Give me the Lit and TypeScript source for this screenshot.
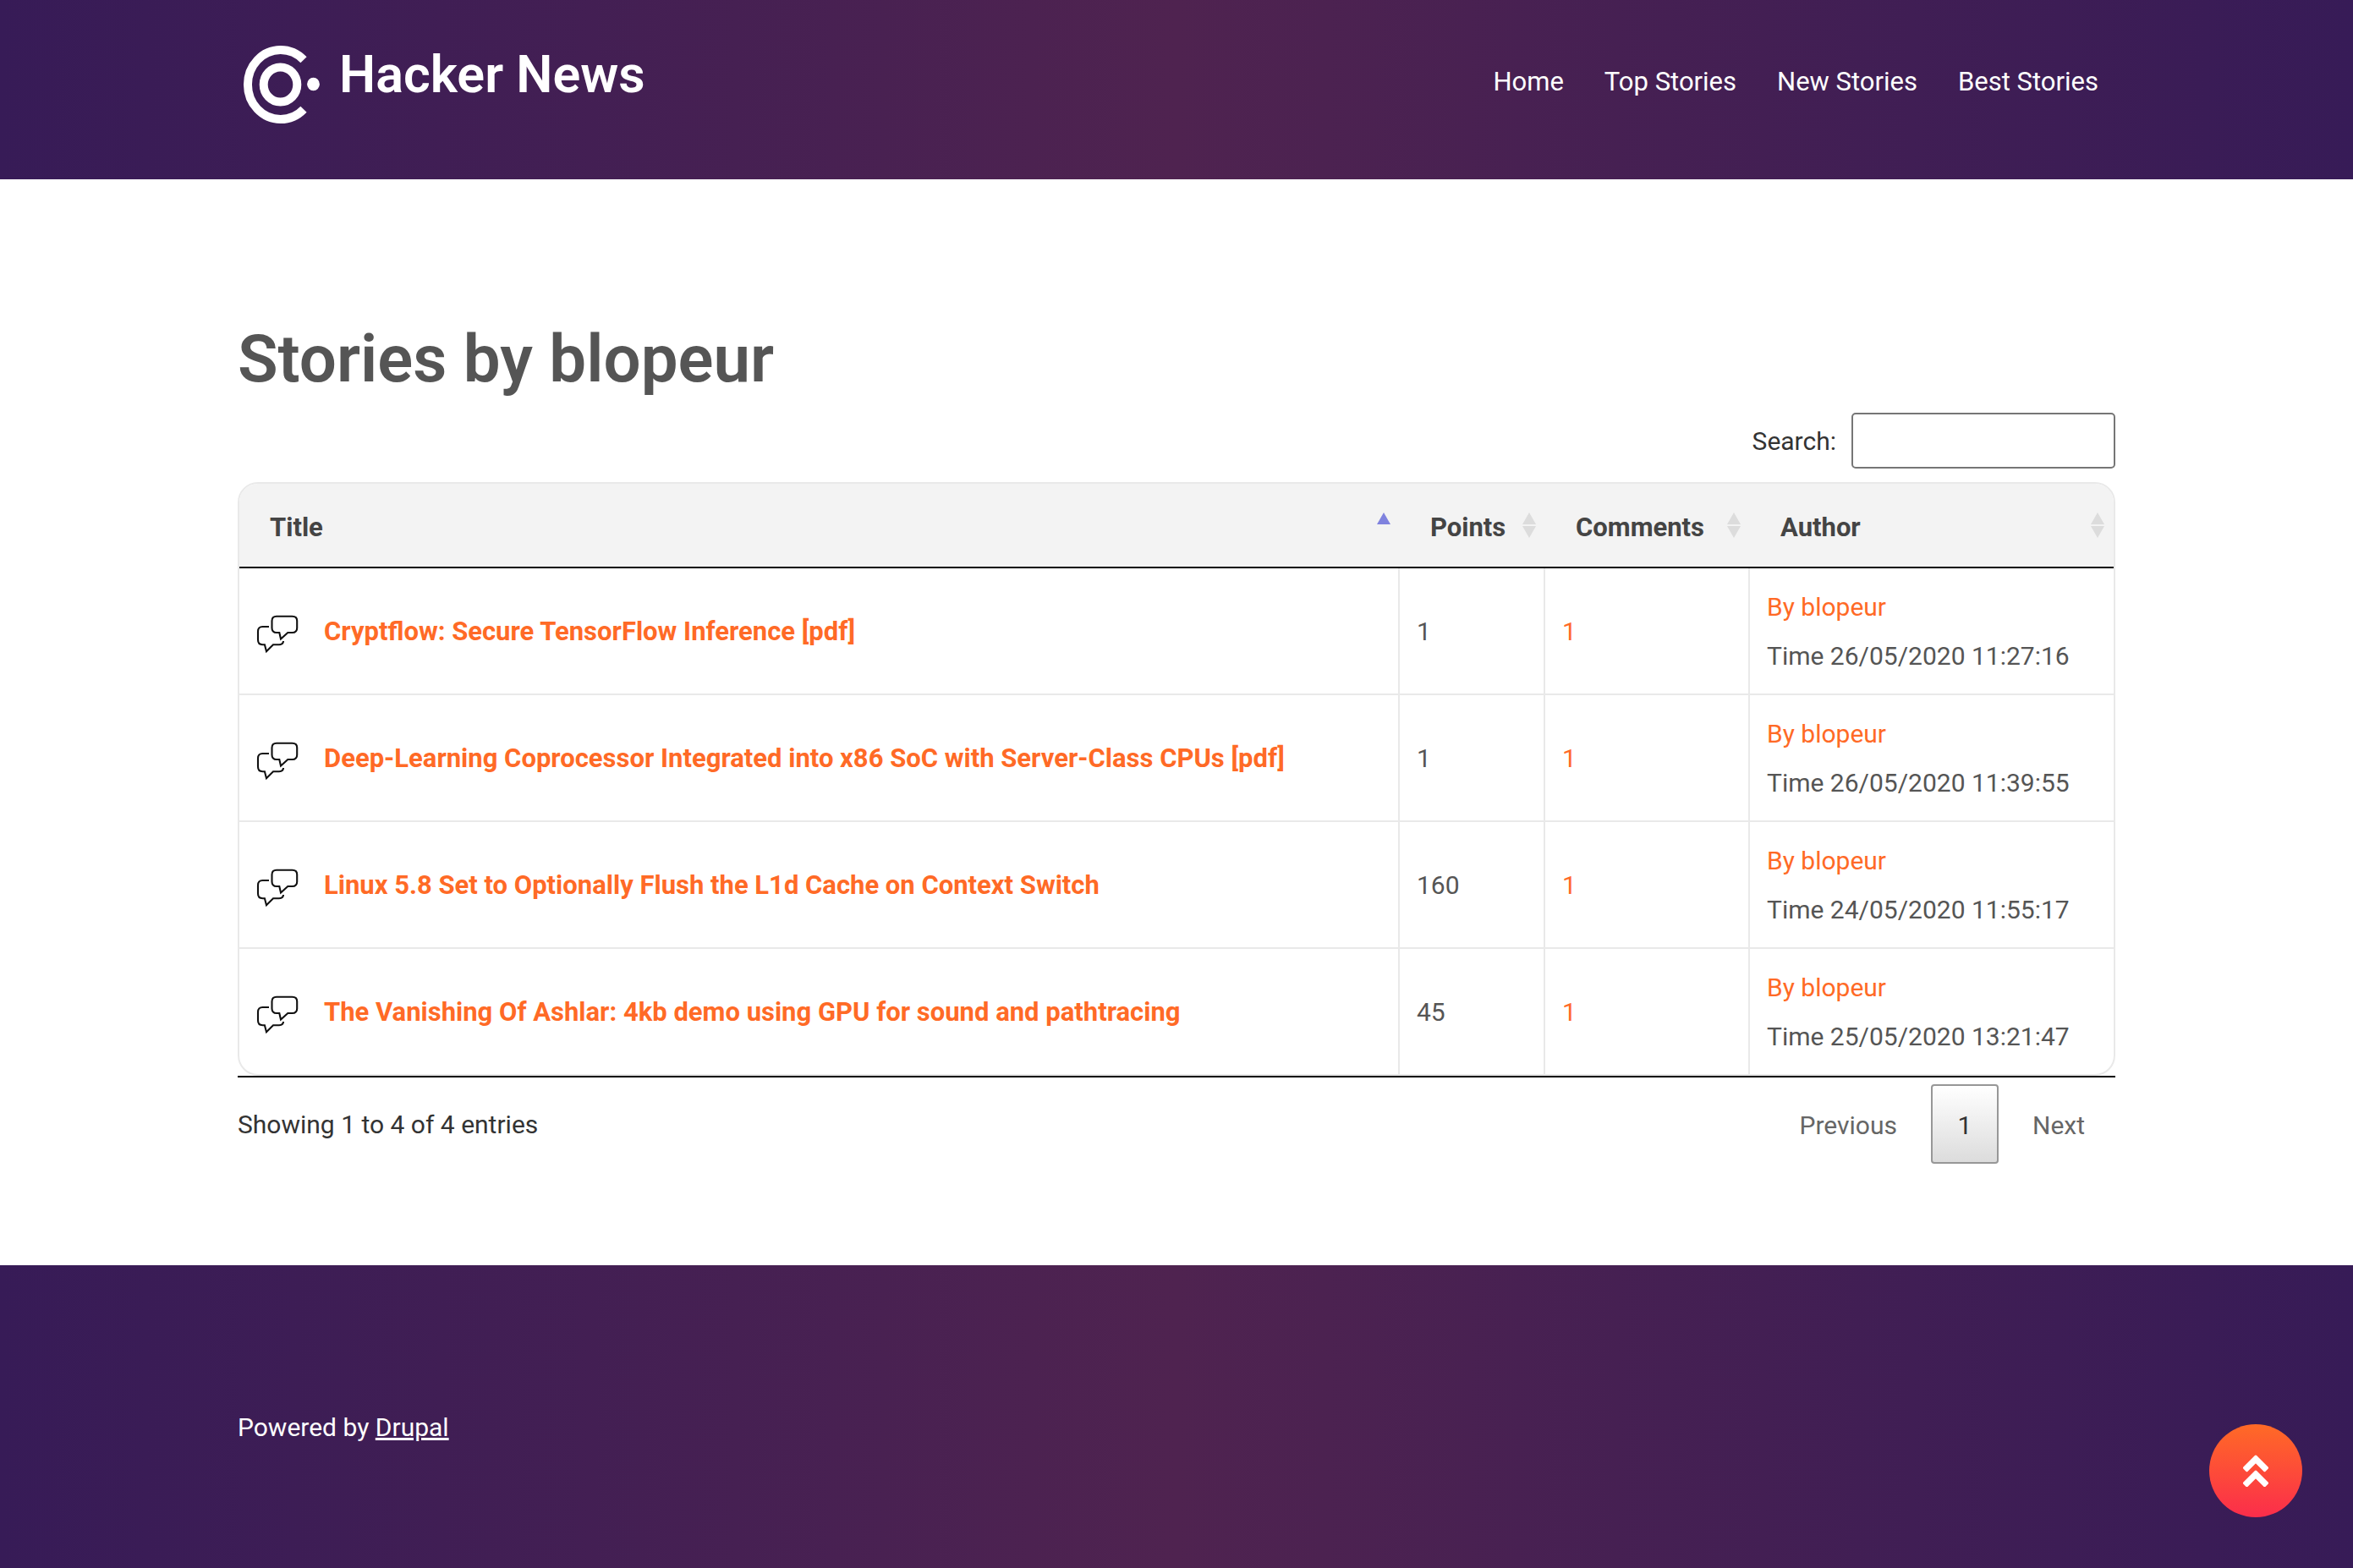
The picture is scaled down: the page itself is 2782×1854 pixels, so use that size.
import { LitElement, html, css, svg } from "lit";
import { customElement, state } from "lit/decorators.js";

interface Story {
  title: string;
  points: number;
  comments: number;
  author: string;
  time: string;
}

const STORIES: Story[] = [
  { title: "Cryptflow: Secure TensorFlow Inference [pdf]", points: 1, comments: 1, author: "blopeur", time: "26/05/2020 11:27:16" },
  { title: "Deep-Learning Coprocessor Integrated into x86 SoC with Server-Class CPUs [pdf]", points: 1, comments: 1, author: "blopeur", time: "26/05/2020 11:39:55" },
  { title: "Linux 5.8 Set to Optionally Flush the L1d Cache on Context Switch", points: 160, comments: 1, author: "blopeur", time: "24/05/2020 11:55:17" },
  { title: "The Vanishing Of Ashlar: 4kb demo using GPU for sound and pathtracing", points: 45, comments: 1, author: "blopeur", time: "25/05/2020 13:21:47" },
];

const NAV = ["Home", "Top Stories", "New Stories", "Best Stories"];
const COLUMNS = ["Title", "Points", "Comments", "Author"];

@customElement("site-header")
export class SiteHeader extends LitElement {
  static styles = css`
    :host {
      display: block;
      background: linear-gradient(to right, #371b57, #4f2350, #371b57);
      color: #fff;
    }
    .inner {
      box-sizing: border-box;
      max-width: 2220px;
      margin: 0 auto;
      padding: 48px 20px 60px 0;
      display: flex;
      align-items: flex-start;
      justify-content: space-between;
    }
    a {
      color: inherit;
      text-decoration: none;
    }
    .brand {
      display: flex;
      align-items: flex-start;
      gap: 16px;
      font-size: 61px;
      font-weight: 600;
      line-height: 80px;
    }
    .logo {
      display: block;
      width: 104px;
      height: 104px;
    }
    .nav {
      display: flex;
      gap: 48px;
      font-size: 31px;
      line-height: 98px;
    }
  `;
  render() {
    return html`
      <header class="inner">
        <a class="brand" href="#">
          <svg class="logo" viewBox="0 0 104 104" fill="none" stroke="#fff" stroke-width="10" aria-hidden="true">
            <path d="M78 22.8A38.8 41 0 1 0 78 81.2" />
            <ellipse cx="50.5" cy="52" rx="19.8" ry="20.6" />
            <ellipse cx="89.5" cy="51.5" rx="7.4" ry="7.7" fill="#fff" stroke="none" />
          </svg>
          <span>Hacker News</span>
        </a>
        <nav class="nav">${NAV.map((n) => html`<a href="#">${n}</a>`)}</nav>
      </header>
    `;
  }
}

@customElement("story-table")
export class StoryTable extends LitElement {
  static styles = css`
    :host {
      display: block;
      color: #333;
      font-size: 30px;
    }
    a {
      color: #ff6a26;
      text-decoration: none;
    }
    .search {
      display: flex;
      justify-content: flex-end;
      align-items: center;
      gap: 18px;
      margin-bottom: 16px;
    }
    .field {
      box-sizing: border-box;
      width: 312px;
      height: 66px;
      padding: 10px;
      border: 2px solid #767676;
      border-radius: 5px;
      background: #fff;
      font: inherit;
      color: inherit;
    }
    .frame {
      border: 2px solid #e9e9e9;
      border-radius: 24px;
      overflow: hidden;
    }
    .underline {
      border-bottom: 2px solid #000;
    }
    .table {
      width: 100%;
      border-collapse: separate;
      border-spacing: 0;
      table-layout: fixed;
    }
    .points {
      width: 172px;
    }
    .comments {
      width: 242px;
    }
    .author {
      width: 430px;
    }
    th {
      box-sizing: border-box;
      height: 100px;
      padding: 0;
      background: #f3f3f3;
      border-bottom: 2px solid #000;
    }
    .sort {
      display: flex;
      align-items: center;
      justify-content: space-between;
      box-sizing: border-box;
      width: 100%;
      padding: 6px 11px 0 36px;
      border: 0;
      background: none;
      color: #444;
      font: inherit;
      font-size: 31px;
      font-weight: 700;
      line-height: 60px;
      cursor: pointer;
    }
    .arrows {
      display: block;
      width: 16px;
      height: 30px;
      margin-bottom: 6px;
    }
    td {
      box-sizing: border-box;
      height: 150px;
      padding: 17px 20px 15px;
      border-right: 2px solid #e9e9e9;
      border-bottom: 2px solid #e9e9e9;
      color: #555;
      line-height: 58px;
      vertical-align: middle;
    }
    td:last-child {
      border-right: 0;
    }
    tbody tr:last-child td {
      height: 148px;
      border-bottom: 0;
    }
    .story {
      display: flex;
      align-items: center;
      gap: 30px;
      font-size: 31px;
      font-weight: 700;
    }
    .bubbles {
      display: block;
      flex: none;
      width: 50px;
      height: 46px;
      margin-top: 6px;
    }
    .foot {
      display: flex;
      justify-content: space-between;
      align-items: center;
      padding-top: 8px;
    }
    .pages {
      display: flex;
      gap: 4px;
    }
    .page {
      box-sizing: border-box;
      height: 94px;
      min-width: 80px;
      padding: 2px 34px 0;
      border: 2px solid transparent;
      border-radius: 4px;
      background: none;
      color: #666;
      font: inherit;
    }
    .page.current {
      padding: 2px 0 0;
      border-color: #979797;
      background: linear-gradient(to bottom, #fff, #dcdcdc);
      color: #333;
    }
  `;

  @state() private query = "";

  private onSearch(e: Event) {
    this.query = (e.target as HTMLInputElement).value.toLowerCase();
  }

  private arrows(sorted: boolean) {
    return html`<svg class="arrows" viewBox="0 0 16 30" aria-hidden="true">
      <path d="M8 0L16 14H0z" fill=${sorted ? "#7f82de" : "#dcdcdc"} />
      ${sorted ? "" : svg`<path d="M8 30L16 16H0z" fill="#dcdcdc" />`}
    </svg>`;
  }

  private row(s: Story) {
    return html`<tr>
      <td>
        <div class="story">
          <svg class="bubbles" viewBox="0 0 50 46" fill="none" stroke="#111" stroke-width="2.1" aria-hidden="true">
            <path d="M24 1.7H42.5Q48.2 1.7 48.2 7V15.5Q48.2 21 42.5 21H37.3L29 28.5L27.3 21H24Q18.5 21 18.5 15.5V7Q18.5 1.7 24 1.7Z" />
            <path d="M15 14H7.5Q2 14 2 19.5V29.5Q2 35.2 7.5 35.2H9.9L12 43.2L20 35.2H27Q32 35 32 31" />
          </svg>
          <a href="#">${s.title}</a>
        </div>
      </td>
      <td>${s.points}</td>
      <td><a href="#">${s.comments}</a></td>
      <td>
        <div><a href="#">By ${s.author}</a></div>
        <div>Time ${s.time}</div>
      </td>
    </tr>`;
  }

  render() {
    const rows = STORIES.filter((s) => s.title.toLowerCase().includes(this.query));
    return html`
      <div class="search">
        <label for="search">Search:</label>
        <input class="field" id="search" type="search" @input=${this.onSearch} />
      </div>
      <div class="underline">
        <div class="frame">
          <table class="table">
            <thead>
              <tr>
                ${COLUMNS.map(
                  (c, i) => html`<th scope="col" class=${c.toLowerCase()}>
                    <button class="sort" type="button"><span>${c}</span>${this.arrows(i === 0)}</button>
                  </th>`
                )}
              </tr>
            </thead>
            <tbody>
              ${rows.map((s) => this.row(s))}
            </tbody>
          </table>
        </div>
      </div>
      <div class="foot">
        <div>Showing ${rows.length ? 1 : 0} to ${rows.length} of ${rows.length} entries</div>
        <nav class="pages">
          <button class="page" type="button">Previous</button>
          <button class="page current" type="button">1</button>
          <button class="page" type="button">Next</button>
        </nav>
      </div>
    `;
  }
}

@customElement("app-root")
export class AppRoot extends LitElement {
  static styles = css`
    :host {
      display: flex;
      flex-direction: column;
      min-height: 100vh;
      background: #fff;
      font-family: Roboto, "Liberation Sans", sans-serif;
    }
    .main {
      box-sizing: border-box;
      width: 100%;
      max-width: 2220px;
      margin: 0 auto;
      padding: 168px 0 120px;
    }
    .heading {
      margin: 0 0 18px;
      color: #555;
      font-size: 78px;
      font-weight: 600;
      line-height: 90px;
    }
    .footer {
      flex: 1;
      padding: 162px 0 136px;
      background: linear-gradient(to right, #371b57, #4f2350, #371b57);
      color: #fff;
      font-size: 30px;
      line-height: 60px;
    }
    .credit {
      max-width: 2220px;
      margin: 0 auto;
    }
    .credit a {
      color: inherit;
    }
    .top {
      position: fixed;
      right: 60px;
      bottom: 60px;
      display: flex;
      align-items: center;
      justify-content: center;
      width: 110px;
      height: 110px;
      padding: 0;
      border: 0;
      border-radius: 50%;
      background: linear-gradient(to bottom, #ff6a26, #fb2d4b);
      cursor: pointer;
    }
    .chevrons {
      width: 30px;
      height: 38px;
    }
  `;
  render() {
    return html`
      <site-header></site-header>
      <main class="main">
        <h1 class="heading">Stories by blopeur</h1>
        <story-table></story-table>
      </main>
      <footer class="footer">
        <div class="credit">Powered by <a href="#">Drupal</a></div>
      </footer>
      <button class="top" type="button" aria-label="Back to top">
        <svg class="chevrons" viewBox="0 0 30 38" fill="#fff" stroke="#fff" stroke-width="3" stroke-linejoin="round">
          <path d="M15 2.1L28.5 15.6L25.5 18.6L15 8.1L4.5 18.6L1.5 15.6Z" />
          <path d="M15 20.1L28.5 33.6L25.5 36.6L15 26.1L4.5 36.6L1.5 33.6Z" />
        </svg>
      </button>
    `;
  }
}
